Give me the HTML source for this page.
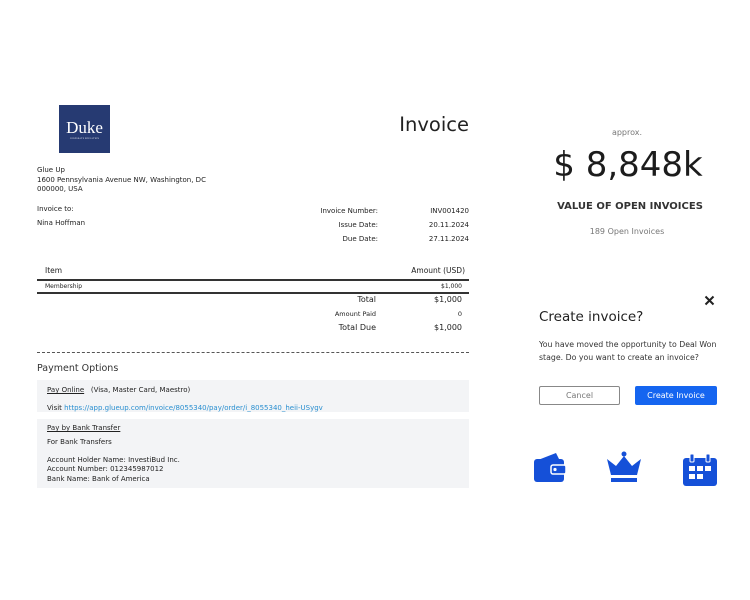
<!DOCTYPE html>
<html><head><meta charset="utf-8"><style>
*{margin:0;padding:0;box-sizing:border-box}
body{width:750px;height:600px;background:#fff;position:relative;overflow:hidden;font-family:"DejaVu Sans","Liberation Sans",sans-serif;color:#222}
.a{position:absolute;white-space:nowrap;line-height:1}
.s{font-size:7px}
.r{text-align:right}
</style></head><body>
<div class="a" style="left:59px;top:105px;width:51px;height:48px;background:#263a72;color:#fff;font-family:'Liberation Serif',serif;font-size:17px;text-align:center;padding-top:14px">Duke<div style="font-size:2px;margin-top:2px;letter-spacing:.3px">CORPORATE EDUCATION</div></div>
<div class="a" style="right:281px;top:115px;font-size:19.5px;color:#222">Invoice</div>
<div class="a s" style="left:37px;top:166px;line-height:9.5px">Glue Up<br>1600 Pennsylvania Avenue NW, Washington, DC<br>000000, USA</div>
<div class="a s" style="left:37px;top:206px">Invoice to:</div>
<div class="a s" style="left:37px;top:220px">Nina Hoffman</div>
<div class="a s r" style="right:372px;top:204px;line-height:14px">Invoice Number:<br>Issue Date:<br>Due Date:</div>
<div class="a s r" style="right:281px;top:204px;line-height:14px">INV001420<br>20.11.2024<br>27.11.2024</div>
<div class="a s" style="left:45px;top:267px;font-size:7.5px">Item</div>
<div class="a s" style="right:285px;top:267px;font-size:7.5px">Amount (USD)</div>
<div class="a" style="left:37px;top:279px;width:432px;height:1.5px;background:#333"></div>
<div class="a" style="left:45px;top:284px;font-size:6px">Membership</div>
<div class="a" style="right:288px;top:284px;font-size:6px">$1,000</div>
<div class="a" style="left:37px;top:292px;width:432px;height:1.5px;background:#333"></div>
<div class="a r" style="right:374px;top:296px;font-size:8px">Total</div>
<div class="a r" style="right:288px;top:296px;font-size:8px">$1,000</div>
<div class="a r" style="right:374px;top:311px;font-size:6.5px">Amount Paid</div>
<div class="a r" style="right:288px;top:311px;font-size:6.5px">0</div>
<div class="a r" style="right:374px;top:324px;font-size:8px">Total Due</div>
<div class="a r" style="right:288px;top:324px;font-size:8px">$1,000</div>
<div class="a" style="left:37px;top:352px;width:432px;border-top:1.5px dashed #555"></div>
<div class="a" style="left:37px;top:364px;font-size:9.5px;color:#333">Payment Options</div>
<div class="a" style="left:37px;top:380px;width:432px;height:32px;background:#f3f4f6"></div>
<div class="a s" style="left:47px;top:387px"><u>Pay Online</u>&nbsp;&nbsp; (Visa, Master Card, Maestro)</div>
<div class="a s" style="left:47px;top:405px">Visit <span style="color:#2a8fd0">https://app.glueup.com/invoice/8055340/pay/order/i_8055340_heii-USygv</span></div>
<div class="a" style="left:37px;top:419px;width:432px;height:69px;background:#f3f4f6"></div>
<div class="a s" style="left:47px;top:425px"><u>Pay by Bank Transfer</u></div>
<div class="a s" style="left:47px;top:439px">For Bank Transfers</div>
<div class="a s" style="left:47px;top:456px;line-height:9.3px">Account Holder Name: InvestiBud Inc.<br>Account Number: 012345987012<br>Bank Name: Bank of America</div>

<div class="a" style="left:527px;width:200px;top:129px;text-align:center;font-size:8px;color:#777">approx.</div>
<div class="a" style="left:528px;width:200px;top:148px;text-align:center;font-size:34px;color:#1c1c1c">$ 8,848k</div>
<div class="a" style="left:530px;width:200px;top:202px;text-align:center;font-size:10px;font-weight:bold;color:#333">VALUE OF OPEN INVOICES</div>
<div class="a" style="left:527px;width:200px;top:228px;text-align:center;font-size:8px;color:#777">189 Open Invoices</div>

<svg class="a" style="left:704px;top:295px" width="11" height="11" viewBox="0 0 11 11"><path d="M1.5 1.5L9.5 9.5M9.5 1.5L1.5 9.5" stroke="#222" stroke-width="2"/></svg>
<div class="a" style="left:539px;top:311px;font-size:13.5px;color:#222">Create invoice?</div>
<div class="a" style="left:539px;top:339px;font-size:7.8px;line-height:12.5px;color:#333">You have moved the opportunity to Deal Won<br>stage. Do you want to create an invoice?</div>
<div class="a" style="left:539px;top:386px;width:81px;height:19px;border:1px solid #888;border-radius:2px;font-size:8px;color:#777;text-align:center;line-height:17px">Cancel</div>
<div class="a" style="left:635px;top:386px;width:82px;height:19px;background:#1565f0;border-radius:2px;font-size:8px;color:#fff;text-align:center;line-height:19px">Create Invoice</div>

<svg class="a" style="left:534px;top:452px" width="32" height="31" viewBox="0 0 32 31"><path d="M4 8L22 1L25 7Z" fill="#1550d8"/><rect x="0" y="7" width="30" height="23" rx="3" fill="#1550d8"/><rect x="17" y="13" width="15" height="9" rx="2" fill="#1550d8" stroke="#fff" stroke-width="1.5"/><circle cx="21" cy="17.5" r="1.6" fill="#fff"/></svg>
<svg class="a" style="left:607px;top:451px" width="34" height="32" viewBox="0 0 34 32"><circle cx="17" cy="3" r="2.5" fill="#1550d8"/><path d="M0 8L9 15L17 5L25 15L34 8L30 24H4Z" fill="#1550d8"/><rect x="4" y="27" width="26" height="4" fill="#1550d8"/></svg>
<svg class="a" style="left:683px;top:454px" width="34" height="32" viewBox="0 0 34 32"><rect x="0" y="4" width="34" height="28" rx="3" fill="#1550d8"/><rect x="7" y="0" width="4" height="8" rx="1" fill="#1550d8" stroke="#fff" stroke-width="1"/><rect x="23" y="0" width="4" height="8" rx="1" fill="#1550d8" stroke="#fff" stroke-width="1"/><g fill="#fff"><rect x="6" y="12" width="6" height="5"/><rect x="14" y="12" width="6" height="5"/><rect x="22" y="12" width="6" height="5"/><rect x="6" y="20" width="6" height="5"/><rect x="14" y="20" width="6" height="5"/></g></svg>
</body></html>
